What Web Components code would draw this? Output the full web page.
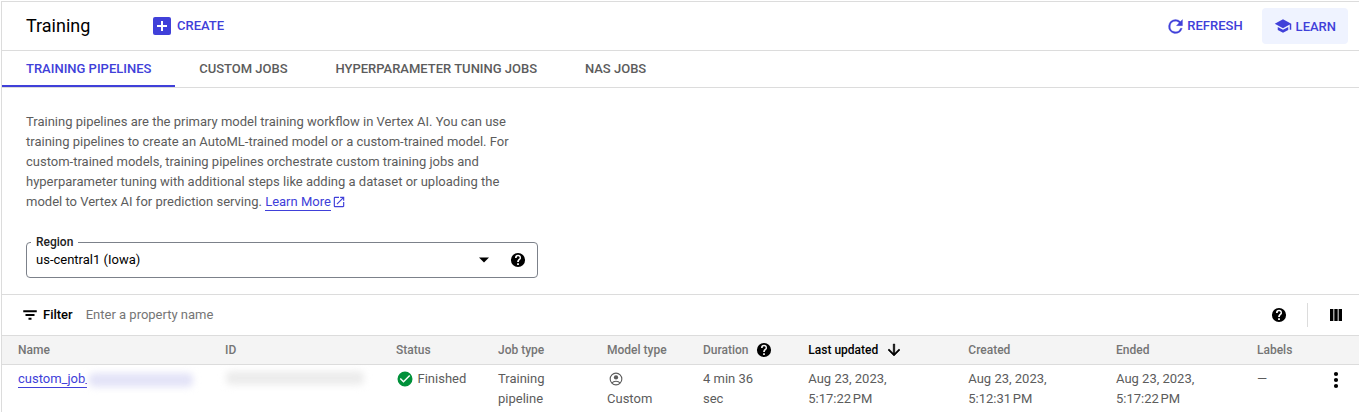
<!DOCTYPE html>
<html lang="en">
<head>
<meta charset="utf-8">
<title>Training</title>
<style>
html,body{margin:0;height:100%;overflow:hidden;background:#fff}
body{font-family:Roboto,"Liberation Sans",sans-serif;font-size:13px;line-height:20px;color:#5c5c5c}
</style>
</head>
<body>
<training-page></training-page>
<script>
const ICONS = {
  add: '<rect x="3" y="3" width="18" height="18" rx="2"/><path d="M11 7h2v4h4v2h-4v4h-2v-4H7v-2h4z" fill="#fff"/>',
  refresh: '<path d="M17.65 6.35A7.96 7.96 0 0 0 12 4a8 8 0 1 0 7.73 10h-2.08A6 6 0 1 1 12 6c1.66 0 3.14.69 4.22 1.78L13 11h7V4z" stroke="currentColor" stroke-width=".3"/>',
  school: '<path d="M5 13.18v4L12 21l7-3.820v-4L12 17zM12 3 1 9l11 6 9-4.910V17h2V9z"/>',
  open: '<path d="M19 19H5V5h7V3H5a2 2 0 0 0-2 2v14a2 2 0 0 0 2 2h14c1.100 0 2-.9 2-2v-7h-2zM14 3v2h3.590l-9.830 9.830 1.410 1.410L19 6.410V10h2V3z"/>',
  help: '<path d="M12 2a10 10 0 1 0 0 20 10 10 0 0 0 0-20zm1.250 17h-2.500v-2.500h2.500zm2.100-7.750-.9.920c-.85.86-1.200 1.530-1.200 2.830h-2.500v-.5c0-1.100.45-2.100 1.170-2.830l1.240-1.260A2 2 0 1 0 10.250 9H7.750a4.250 4.250 0 1 1 8.500 0c0 .88-.36 1.680-.9 2.250z"/>',
  down: '<path d="M6 9l6 6 6-6z"/>',
  filter: '<path d="M10 18.300h4v-2.600h-4zM3 5.700v2.600h18V5.700zm3 7.600h12v-2.600H6z"/>',
  columns: '<path d="M4 4h4.500v16H4zM9.750 4h4.500v16h-4.500zM15.500 4H20v16h-4.500z"/>',
  check: '<path d="M12 2a10 10 0 1 0 0 20 10 10 0 0 0 0-20zm-2 15-5-5 1.410-1.410L10 14.170l7.590-7.590L19 8z"/>',
  person: '<g fill="none" stroke="currentColor" stroke-width="1.900"><circle cx="12" cy="12" r="10"/><path d="M5 18.800c3-4 11-4 14 0"/></g><circle cx="12" cy="9.300" r="3.700"/>',
  arrow: '<path d="M20 12l-1.410-1.410L13 16.170V4h-2v12.170l-5.580-5.590L4 12l8 8z" stroke="currentColor" stroke-width=".7"/>',
  more: '<circle cx="12" cy="4.800" r="2.500"/><circle cx="12" cy="12" r="2.500"/><circle cx="12" cy="19.200" r="2.500"/>'
};
const BOXES = {help: '.7 .7 22.6 22.6'};
function define(name, html) {
  customElements.define(name, class extends HTMLElement {
    connectedCallback() {
      if (this.shadowRoot) return;
      const t = document.createElement('template');
      t.innerHTML = typeof html === 'function' ? html(this) : html;
      this.attachShadow({mode: 'open'}).append(t.content.cloneNode(true));
    }
  });
}
define('ui-icon', el => `<style>
:host{display:inline-block;flex:none;width:${el.getAttribute('size') || 18}px;height:${el.getAttribute('size') || 18}px}
svg{display:block;width:100%;height:100%;fill:currentColor}</style>
<svg viewBox="${BOXES[el.getAttribute('name')] || '0 0 24 24'}">${ICONS[el.getAttribute('name')]}</svg>`);

define('action-button', `<style>
:host{display:flex;align-items:center;gap:var(--gap,4px);height:36px;box-sizing:border-box;color:#4040d9;font-weight:500;white-space:nowrap}
:host([filled]){background:#eff3ff;border-radius:4px;padding:1px 12px 0}
</style><slot name="icon"></slot><span><slot></slot></span>`);

define('page-header', `<style>
:host{display:flex;align-items:center;height:48px;padding:0 11px 0 24px;border-bottom:1px solid #dcdcdc}
h1{margin:0;font-size:18px;line-height:24px;font-weight:400;color:#000;width:124px}
.end{display:flex;align-items:center;gap:19px;margin-left:auto}
</style><h1><slot></slot></h1><slot name="start"></slot><div class="end"><slot name="end"></slot></div>`);

define('tab-item', `<style>
:host{display:block;box-sizing:border-box;height:36px;padding:8px 23.800px 0 24px;font-weight:500;white-space:nowrap;color:#5c5c5c}
:host([active]){color:#4040d9;border-bottom:2px solid #4040d9}
</style><slot></slot>`);

define('tab-bar', `<style>
:host{display:flex;height:36px;border-bottom:1px solid #dcdcdc}
</style><slot></slot>`);

define('text-link', `<style>
:host{display:inline-block;line-height:16px;color:#4040d9;border-bottom:1px solid #4040d9}
</style><slot></slot>`);

define('select-field', el => `<style>
:host{display:block;width:512px}
fieldset{box-sizing:border-box;height:41px;margin:0;padding:0 11px 0 4px;border:1px solid #7c818a;border-radius:4px;min-width:0}
legend{padding:0 5px;font-size:12px;line-height:11px;height:11px;font-weight:500;color:#222}
.row{display:flex;align-items:center;height:23px;padding-left:5px;color:#000}
.row span{flex:1}
ui-icon+ui-icon{margin:1px 0 0 16px}
</style><fieldset><legend>${el.getAttribute('label')}</legend><div class="row"><span><slot></slot></span><ui-icon name="down" size="20"></ui-icon><ui-icon name="help" size="16"></ui-icon></div></fieldset>`);

define('filter-bar', `<style>
:host{display:flex;align-items:center;height:40px;border-top:1px solid #dcdcdc;padding:0 14px 0 19px;color:#000}
b{font-weight:500;margin:0 13px 0 4px}
.hint{flex:1;color:#757575}
i{width:1px;height:24px;background:#dcdcdc;margin:0 19px 0 20px}
</style><ui-icon name="filter"></ui-icon><b>Filter</b><span class="hint">Enter a property name</span><ui-icon name="help" size="16"></ui-icon><i></i><ui-icon name="columns" size="18"></ui-icon>`);

define('data-row', `<style>
:host{display:grid;grid-template-columns:207px 171px 102px 109px 96px 105.300px 160px 147.700px 141px 1fr 16px;padding:4px 15px 0 16px}
:host([head]){height:30px;box-sizing:border-box;align-items:center;padding-top:0;border-top:1px solid #dcdcdc;border-bottom:1px solid #dcdcdc;background:#f4f4f4;font-size:12px;font-weight:500;color:#757575}
</style><slot></slot>`);

define('data-cell', `<style>
:host{display:block;min-width:0;white-space:nowrap}
:host([flex]){display:flex;align-items:center;gap:var(--gap,4px);height:20px}
:host([sorted]){color:#000}
</style><slot></slot>`);

define('redacted-text', el => `<style>
:host{display:block;flex:none;height:18px;background:#fff;z-index:1}
div{width:${el.getAttribute('w')}px;height:14px;margin:3px 0 0 2px;border-radius:5px;background:${el.getAttribute('tone')};filter:blur(3.500px)}
</style><div></div>`);

define('training-page', `<style>
:host{display:block;box-sizing:border-box;height:412px;padding-top:1px}
main{box-sizing:border-box;height:411px;margin-left:1px;border-top:1px solid #dcdcdc;border-left:1px solid #dcdcdc;overflow:hidden}
p{margin:24px 0 0 24px;width:500px;white-space:nowrap}
p ui-icon{color:#4040d9;vertical-align:-2.500px;margin-left:1px}
select-field{margin:25px 0 16px 24px}
</style>
<main>
<page-header>Training
<action-button slot="start" style="--gap:3px"><ui-icon slot="icon" name="add" size="24"></ui-icon>CREATE</action-button>
<action-button slot="end" style="--gap:1.500px"><ui-icon slot="icon" name="refresh" size="21"></ui-icon>REFRESH</action-button>
<action-button slot="end" filled><ui-icon slot="icon" name="school" size="18" style="margin-bottom:1px"></ui-icon>LEARN</action-button>
</page-header>
<tab-bar><tab-item active>TRAINING PIPELINES</tab-item><tab-item>CUSTOM JOBS</tab-item><tab-item>HYPERPARAMETER TUNING JOBS</tab-item><tab-item>NAS JOBS</tab-item></tab-bar>
<p>Training pipelines are the primary model training workflow in Vertex AI. You can use<br>training pipelines to create an AutoML-trained model or a custom-trained model. For<br>custom-trained models, training pipelines orchestrate custom training jobs and<br>hyperparameter tuning with additional steps like adding a dataset or uploading the<br>model to Vertex AI for prediction serving. <text-link>Learn More</text-link><ui-icon name="open" size="14"></ui-icon></p>
<select-field label="Region">us-central1 (Iowa)</select-field>
<filter-bar></filter-bar>
<data-row head><data-cell>Name</data-cell><data-cell>ID</data-cell><data-cell>Status</data-cell><data-cell>Job type</data-cell><data-cell>Model type</data-cell><data-cell flex style="--gap:7.500px">Duration<ui-icon name="help" size="16" style="color:#000"></ui-icon></data-cell><data-cell flex sorted style="--gap:7px">Last updated<ui-icon name="arrow" size="18"></ui-icon></data-cell><data-cell>Created</data-cell><data-cell>Ended</data-cell><data-cell>Labels</data-cell></data-row>
<data-row><data-cell flex style="--gap:0"><text-link>custom_job_</text-link><redacted-text w="104" tone="#e3e3f7" style="margin-left:-4px"></redacted-text></data-cell><data-cell flex><redacted-text w="138" tone="#ececec" style="margin:-4px 0 0 -1px"></redacted-text></data-cell><data-cell flex style="--gap:3.500px"><ui-icon name="check" size="18" style="color:#00913a"></ui-icon>Finished</data-cell><data-cell>Training<br>pipeline</data-cell><data-cell><ui-icon name="person" size="14" style="margin:3px 0 3px 2px;display:block"></ui-icon>Custom</data-cell><data-cell>4 min 36<br>sec</data-cell><data-cell>Aug 23, 2023,<br>5:17:22&#8239;PM</data-cell><data-cell>Aug 23, 2023,<br>5:12:31&#8239;PM</data-cell><data-cell>Aug 23, 2023,<br>5:17:22&#8239;PM</data-cell><data-cell>—</data-cell><data-cell flex><ui-icon name="more" size="20" style="color:#000;margin:2px 0 0 -2px"></ui-icon></data-cell></data-row>
</main>`);
</script>
</body>
</html>
